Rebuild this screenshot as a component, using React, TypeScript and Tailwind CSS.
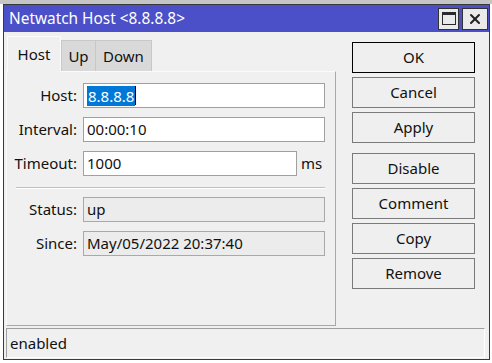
import {X} from "lucide-react";

const font = {fontFamily: '"Noto Sans", "Open Sans", sans-serif'};

function Field({label, value, width = "w-[242px]", readOnly = false, selected = false, suffix}: {
  label: string;
  value: string;
  width?: string;
  readOnly?: boolean;
  selected?: boolean;
  suffix?: string;
}) {
  return (
    <div className="flex items-center">
      <div className="w-[66px] text-right text-[15px] text-[#111]">{label}:</div>
      <div
        className={`ml-[6px] flex h-[25px] items-center border px-[3px] text-[15px] text-[#111] ${width} ${
          readOnly ? "border-[#a9a9a9] bg-[#ececec]" : "border-[#a0a0a0] bg-white"
        }`}>
        {selected ? (
          <span className="flex items-center">
            <span className="bg-[#0078d7] px-[1px] leading-[20px] text-white">{value}</span>
            <span className="h-[19px] w-[1px] bg-black" />
          </span>
        ) : (
          <span>{value}</span>
        )}
      </div>
      {suffix && <span className="ml-[4px] text-[15px] text-[#111]">{suffix}</span>}
    </div>
  );
}

function Btn({children, primary = false}: {children: string; primary?: boolean}) {
  return (
    <button
      className={`flex h-[31px] w-[123px] items-center justify-center bg-[#efefef] text-[15px] text-[#111] ${
        primary ? "border-[1.5px] border-black" : "border border-[#7a7a7a]"
      }`}>
      {children}
    </button>
  );
}

export default function App() {
  return (
    <div className="h-[363px] w-[492px] overflow-hidden bg-white" style={font}>
      <div className="h-[4px] bg-[#c6c6c6]" />
      <div className="ml-[3px] flex h-[356px] w-[487px] flex-col border border-[#3a3a3a] bg-[#f0f0f0]">
        {/* title bar */}
        <div className="flex h-[27px] items-center bg-[#4b4fc8] pl-[5px] pr-[1px]">
          <span className="text-[15.4px] text-white">Netwatch Host &lt;8.8.8.8&gt;</span>
          <div className="ml-auto flex gap-[3px]">
            <div className="flex h-[22px] w-[21px] items-center justify-center border border-[#333] bg-[#eaeaea]">
              <div className="h-[13px] w-[14px] border-[1.5px] border-t-[3px] border-[#2a2a2a]" />
            </div>
            <div className="flex h-[22px] w-[26px] items-center justify-center border border-[#333] bg-[#eaeaea]">
              <X className="h-[16px] w-[16px] text-[#222]" strokeWidth={3} />
            </div>
          </div>
        </div>

        {/* body */}
        <div className="flex flex-1 flex-col pl-[2px] pr-[4px]">
          <div className="flex">
            <div className="flex w-[330px] flex-col pt-[4px]">
              {/* tabs */}
              <div className="relative z-10 flex items-end pl-[1px]">
                <div className="flex h-[36px] w-[54px] items-center justify-center border border-b-0 border-[#fbfbfb] bg-[#f0f0f0] text-[15px] text-[#111]">
                  Host
                </div>
                <div className="mb-[1px] flex h-[31px] w-[35px] items-center justify-center border border-b-0 border-[#c8c8c8] bg-[#d9d9d9] text-[15px] text-[#111]">
                  Up
                </div>
                <div className="mb-[1px] flex h-[31px] w-[56px] items-center justify-center border border-b-0 border-l-0 border-[#c8c8c8] bg-[#d9d9d9] text-[15px] text-[#111]">
                  Down
                </div>
              </div>
              {/* panel */}
              <div className="-mt-[1px] flex h-[255px] flex-col border border-r-[#a8a8a8] border-t-[#fbfbfb] border-l-[#fbfbfb] border-b-[#a8a8a8] pl-[4px] pt-[11px]">
                <div className="flex flex-col gap-[9px]">
                  <Field label="Host" value="8.8.8.8" selected />
                  <Field label="Interval" value="00:00:10" />
                  <Field label="Timeout" value="1000" width="w-[214px]" suffix="ms" />
                </div>
                <div className="ml-[5px] mt-[11px] h-[2px] w-[309px] border-t border-b border-t-[#c0c0c0] border-b-white" />
                <div className="mt-[8px] flex flex-col gap-[9px]">
                  <Field label="Status" value="up" readOnly />
                  <Field label="Since" value="May/05/2022 20:37:40" readOnly />
                </div>
              </div>
            </div>

            {/* buttons */}
            <div className="ml-[16px] flex flex-col pt-[10px]">
              <Btn primary>OK</Btn>
              <div className="mt-[4px] flex flex-col gap-[4px]">
                <Btn>Cancel</Btn>
                <Btn>Apply</Btn>
              </div>
              <div className="mt-[10px] flex flex-col gap-[4px]">
                <Btn>Disable</Btn>
                <Btn>Comment</Btn>
                <Btn>Copy</Btn>
                <Btn>Remove</Btn>
              </div>
            </div>
          </div>

          {/* status bar */}
          <div className="mt-[2px] flex h-[30px] items-center border border-t-[#a0a0a0] border-l-[#a0a0a0] border-b-white border-r-white pl-[3px] text-[15px] text-[#111]">
            enabled
          </div>
        </div>
      </div>
    </div>
  );
}
